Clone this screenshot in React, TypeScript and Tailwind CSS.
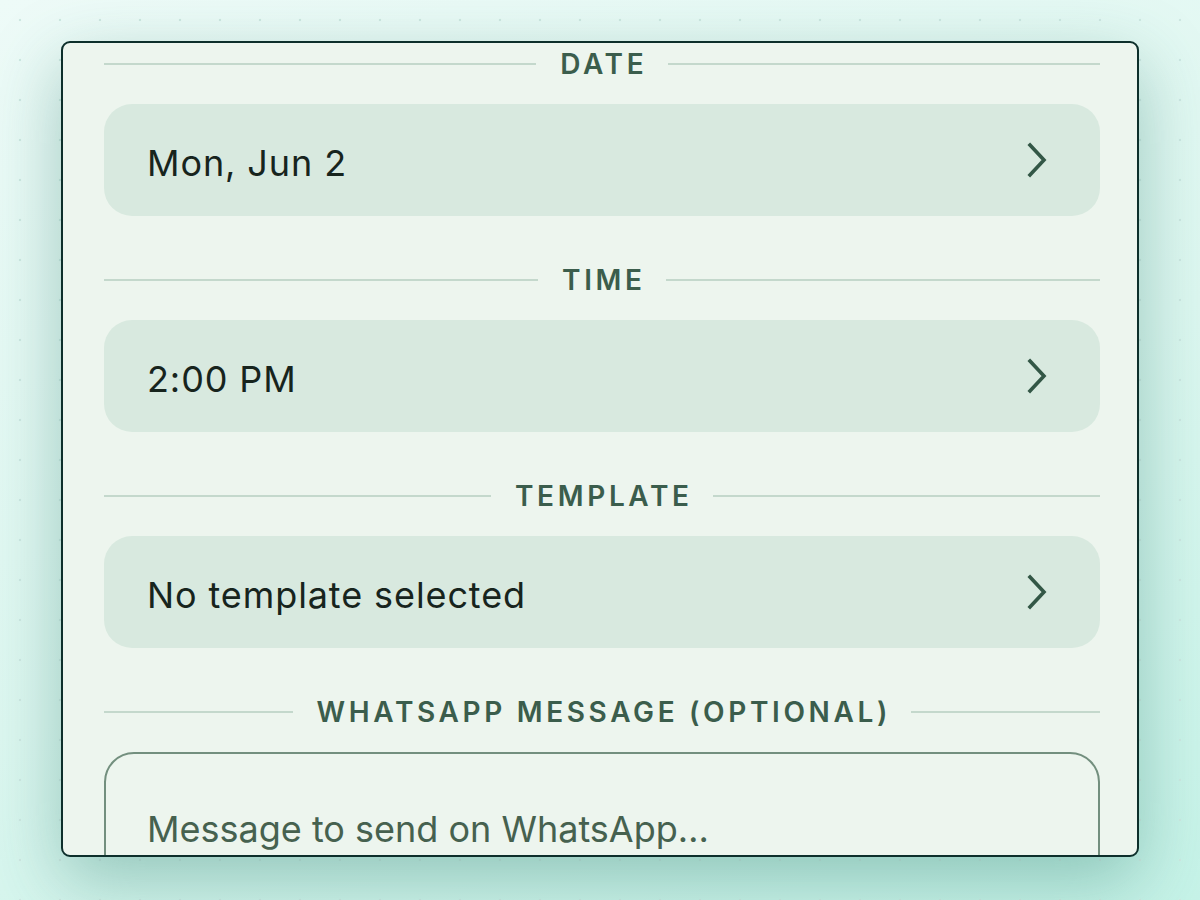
import React from "react";

function Chevron() {
  return (
    <svg width="24" height="40" viewBox="0 0 24 40" fill="none" className="shrink-0">
      <path
        d="M6 5 L20 20 L6 35"
        stroke="#335746"
        strokeWidth="3.6"
        strokeLinecap="square"
        strokeLinejoin="miter"
      />
    </svg>
  );
}

function SectionLabel({ label }: { label: string }) {
  return (
    <div className="flex items-center gap-6 h-8">
      <div className="flex-1 h-[2px] bg-[#c4d8cc]" />
      <span className="text-[28px] leading-8 font-semibold tracking-[0.13em] mr-[-0.13em] text-[#3b5d4c]">
        {label}
      </span>
      <div className="flex-1 h-[2px] bg-[#c4d8cc]" />
    </div>
  );
}

function PickerRow({ value }: { value: string }) {
  return (
    <button className="w-full h-[112px] mt-6 rounded-[28px] bg-[#d8e9df] flex items-center justify-between pl-[43px] pr-[52px] text-left">
      <span className="text-[36px] pt-[5px] tracking-[0.025em] text-[#17241d]">{value}</span>
      <Chevron />
    </button>
  );
}

export default function App() {
  const rows = [
    { label: "DATE", value: "Mon, Jun 2" },
    { label: "TIME", value: "2:00 PM" },
    { label: "TEMPLATE", value: "No template selected" },
  ];

  return (
    <div
      className="w-[1200px] h-[900px] overflow-hidden bg-[linear-gradient(160deg,#eefbf8_0%,#ddf7f0_55%,#c6f3e8_100%)] pt-[41px] px-[61px]"
      style={{ fontFamily: "Inter, 'Noto Sans', sans-serif" }}
    >
      <div className="absolute inset-0 bg-[radial-gradient(circle,#cfe8e2_1.2px,transparent_1.6px)] bg-[length:40px_40px] bg-[position:0_0] pointer-events-none" />
      <div className="relative h-[816px] rounded-[9px] border-2 border-[#0d2f2b] bg-[#edf5ee] overflow-hidden shadow-[0_24px_70px_rgba(40,120,105,0.38)] pl-[41px] pr-[37px] pt-[5px]">
        {rows.map((r, i) => (
          <div key={r.label} className={i > 0 ? "mt-[48px]" : ""}>
            <SectionLabel label={r.label} />
            <PickerRow value={r.value} />
          </div>
        ))}
        <div className="mt-[48px]">
          <SectionLabel label="WHATSAPP MESSAGE (OPTIONAL)" />
          <div className="mt-6 h-[160px] rounded-[30px] border-2 border-[#738f7e] pl-[41px] pt-[48px]">
            <span className="text-[36px] text-[#46614f]">Message to send on WhatsApp…</span>
          </div>
        </div>
      </div>
    </div>
  );
}
